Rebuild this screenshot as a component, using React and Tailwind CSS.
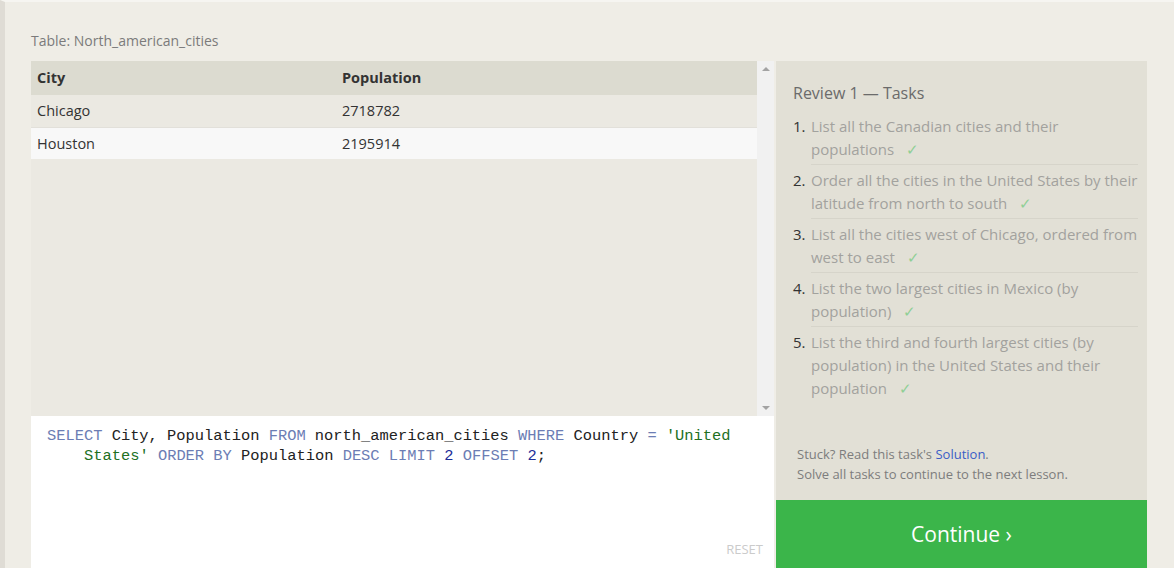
import React from 'react';

const tasks = [
    ['List all the Canadian cities and their', 'populations'],
    ['Order all the cities in the United States by their', 'latitude from north to south'],
    ['List all the cities west of Chicago, ordered from', 'west to east'],
    ['List the two largest cities in Mexico (by', 'population)'],
    ['List the third and fourth largest cities (by', 'population) in the United States and their', 'population'],
];

const rows = [
    { city: 'Chicago', population: '2718782' },
    { city: 'Houston', population: '2195914' },
];

const App = () => {
    return (
        <div
            className="h-[568px] w-[1174px] overflow-hidden bg-[#efede6] border-l-[5px] border-[#dfdcd5] border-t-2 border-t-[#f6f5f1]"
            style={{ fontFamily: '"Open Sans", "Noto Sans", sans-serif' }}
        >
            <div className="pl-[26px] pr-[27px]">
                {/* Title */}
                <div className="h-[59px] pt-[29px] text-[14px] text-[#7b7b7b] leading-[20px]">Table: North_american_cities</div>

                <div className="flex gap-[2px]">
                    {/* Left column */}
                    <div className="w-[743px] flex flex-col">
                        <div className="h-[355px] flex bg-[#ebe9e2]">
                            <div className="flex-1">
                                <div className="flex h-[34px] items-center bg-[#dcdbd0] text-[14.5px] font-bold text-[#333]">
                                    <div className="w-[305px] pl-[6px]">City</div>
                                    <div className="pl-[6px]">Population</div>
                                </div>
                                {rows.map((r, i) => (
                                    <div
                                        key={r.city}
                                        className={`flex h-[32px] items-center text-[14.5px] text-[#333] ${i % 2 === 0 ? 'bg-[#ebe9e2]' : 'bg-[#f8f8f8] border-t border-[#e2e0da]'}`}
                                    >
                                        <div className="w-[305px] pl-[6px]">{r.city}</div>
                                        <div className="pl-[6px]">{r.population}</div>
                                    </div>
                                ))}
                            </div>
                            {/* Scrollbar */}
                            <div className="w-[17px] bg-[#f1f1f1] flex flex-col justify-between items-center py-[6px]">
                                <div className="w-0 h-0 border-l-[4px] border-r-[4px] border-b-[4px] border-l-transparent border-r-transparent border-b-[#a3a3a3]" />
                                <div className="w-0 h-0 border-l-[4px] border-r-[4px] border-t-[4px] border-l-transparent border-r-transparent border-t-[#a3a3a3]" />
                            </div>
                        </div>

                        {/* Editor */}
                        <div className="h-[152px] bg-white relative pt-[10px] pl-[16px] pr-[30px]">
                            <div
                                className="text-[15.4px] leading-[20px] text-[#222] pl-[37px]"
                                style={{ fontFamily: '"Liberation Mono", monospace' }}
                            >
                                <div className="-ml-[37px] whitespace-pre">
                                    <span className="text-[#6c7db4]">SELECT</span> City, Population <span className="text-[#6c7db4]">FROM</span> north_american_cities <span className="text-[#6c7db4]">WHERE</span> Country <span className="text-[#6c7db4]">=</span> <span className="text-[#22701f]">'United</span>
                                </div>
                                <div className="whitespace-pre">
                                    <span className="text-[#22701f]">States'</span> <span className="text-[#6c7db4]">ORDER BY</span> Population <span className="text-[#6c7db4]">DESC LIMIT</span> <span className="text-[#1c2e99]">2</span> <span className="text-[#6c7db4]">OFFSET</span> <span className="text-[#1c2e99]">2</span>;
                                </div>
                            </div>
                            <div className="absolute right-[11px] bottom-[9px] text-[13px] text-[#cbcbcb]">RESET</div>
                        </div>
                    </div>

                    {/* Right column */}
                    <div className="w-[371px] flex flex-col">
                        <div className="h-[439px] bg-[#e2e0d6] pl-[17px] pr-[9px] pt-[21px] flex flex-col">
                            <div className="text-[16px] text-[#6b6b6b] leading-[22px]">Review 1 — Tasks</div>
                            <ol className="mt-[7px]">
                                {tasks.map((t, i) => (
                                    <li
                                        key={i}
                                        className={`flex pb-[3px] pt-[4px] ${i < tasks.length - 1 ? 'border-b border-[#d6d4ca]' : ''} ml-[18px]`}
                                    >
                                        <span className="-ml-[18px] w-[18px] shrink-0 text-[15px] leading-[23px] text-[#333]">{i + 1}.</span>
                                        <span className="text-[15px] leading-[23px] text-[#a2a29e]">
                                            {t.map((line, j) => (
                                                <span key={j} className="block">
                                                    {line}
                                                    {j === t.length - 1 && <span className="ml-[12px] text-[#8fcf95]">✓</span>}
                                                </span>
                                            ))}
                                        </span>
                                    </li>
                                ))}
                            </ol>
                            <div className="mt-auto pb-[16px] pl-[4px] text-[13px] leading-[20px] text-[#7d7d7d]">
                                <div>Stuck? Read this task's <span className="text-[#3a5dc6]">Solution</span>.</div>
                                <div>Solve all tasks to continue to the next lesson.</div>
                            </div>
                        </div>
                        <div className="h-[70px] bg-[#3bb54a] flex items-center justify-center text-white text-[21px]">
                            Continue ›
                        </div>
                    </div>
                </div>
            </div>
        </div>
    );
};

export default App;
